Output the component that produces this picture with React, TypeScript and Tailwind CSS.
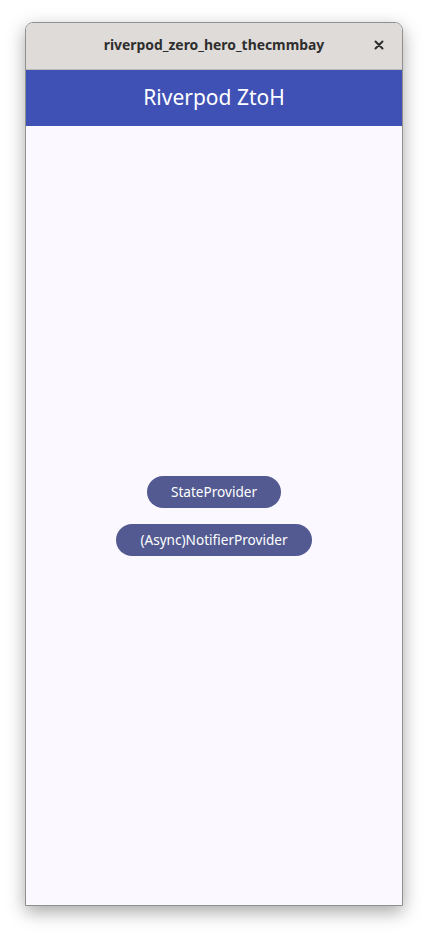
import React from 'react';

const App: React.FC = () => {
  const buttons = ['StateProvider', '(Async)NotifierProvider'];

  return (
    <div className="w-[428px] h-[934px] bg-white pt-[22px] pl-[25px]" style={{ fontFamily: '"Noto Sans", "Open Sans", sans-serif' }}>
      <div className="w-[378px] h-[884px] flex flex-col border border-[#8f8f8f] rounded-t-[8px] overflow-hidden shadow-[0_6px_18px_rgba(0,0,0,0.35)]">
        {/* Title bar */}
        <div className="relative h-[47px] shrink-0 bg-[#dedbd8] border-b border-[#bdbab6] flex items-center justify-center">
          <span className="text-[13.9px] font-bold text-[#2e2e2e] -translate-y-[1px]">riverpod_zero_hero_thecmmbay</span>
          <svg className="absolute right-[18px] top-[17px]" width="10" height="10" viewBox="0 0 10 10">
            <path d="M1.5 1.5 L8.5 8.5 M8.5 1.5 L1.5 8.5" stroke="#2e2e2e" strokeWidth="2" strokeLinecap="round" />
          </svg>
        </div>

        {/* App bar */}
        <div className="h-[56px] shrink-0 bg-[#3f51b5] flex items-center justify-center">
          <span className="text-[21px] text-white">Riverpod ZtoH</span>
        </div>

        {/* Body */}
        <div className="flex-1 bg-[#fbf8ff] flex flex-col items-center justify-center gap-[16px] pt-[1px]">
          {buttons.map((label) => (
            <button
              key={label}
              className="h-[32px] px-[24px] rounded-full bg-[#525a91] text-white text-[13.6px] flex items-center"
            >
              {label}
            </button>
          ))}
        </div>
      </div>
    </div>
  );
};

export default App;
